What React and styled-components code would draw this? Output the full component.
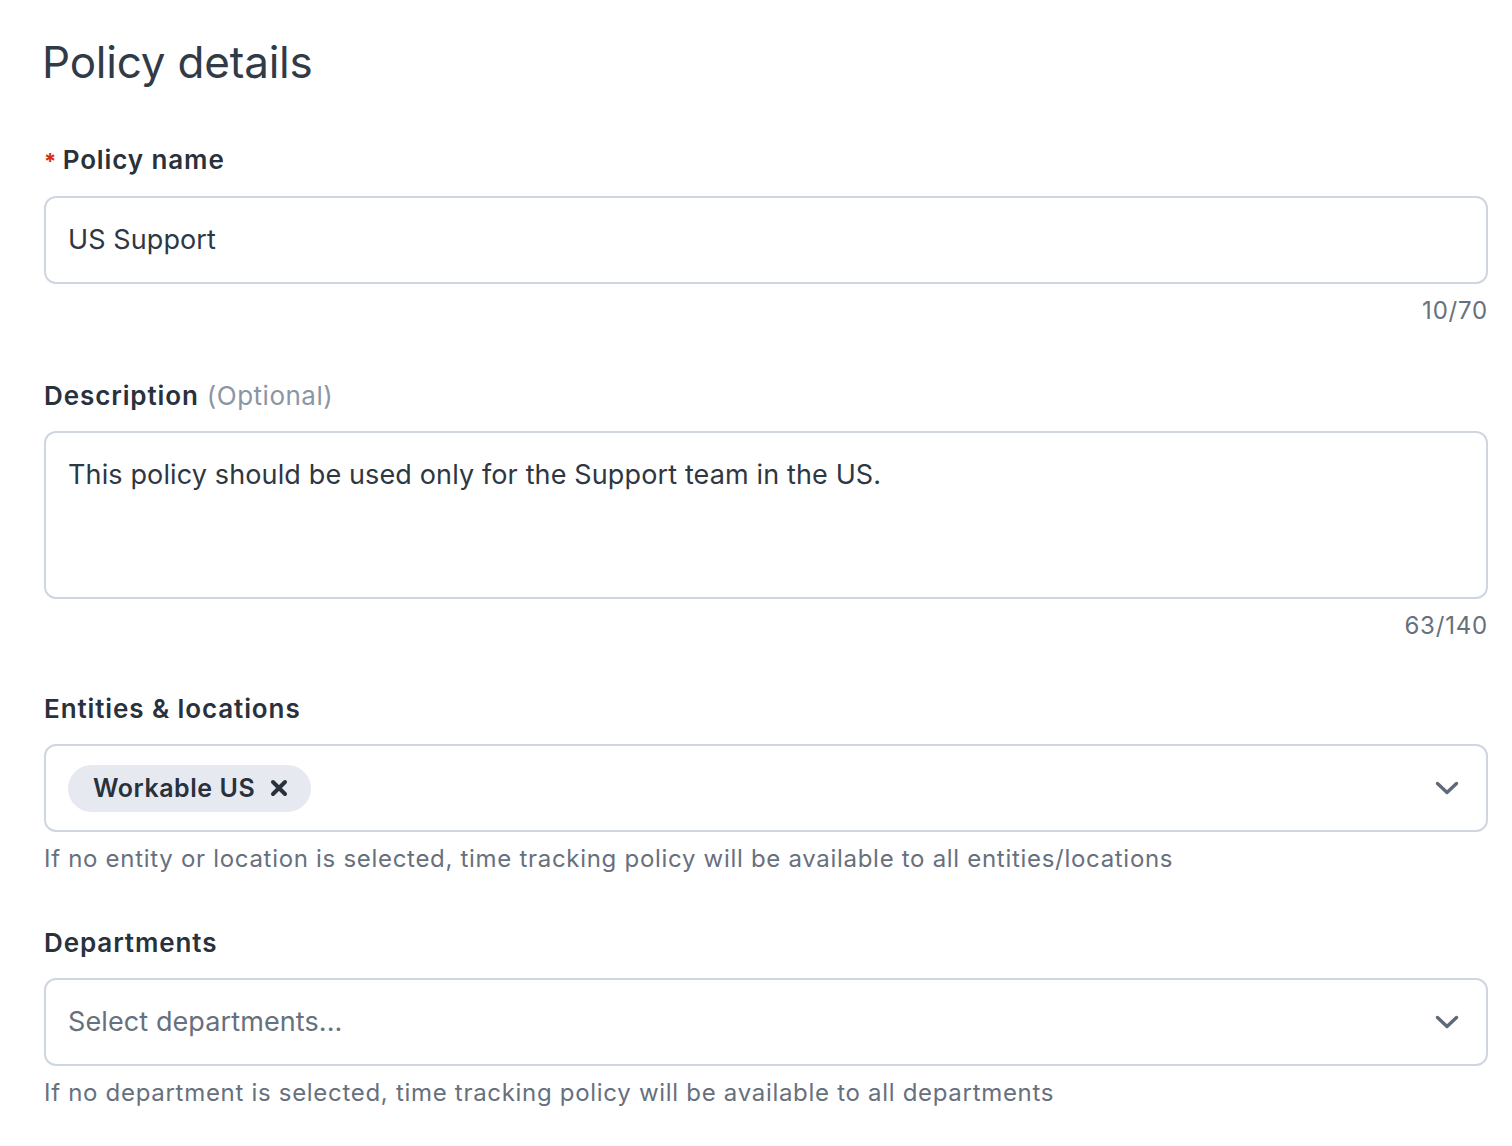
import React from "react";
import styled, { createGlobalStyle } from "styled-components";

const Global = createGlobalStyle`
  html, body { margin: 0; padding: 0; background: #ffffff; }
  body { font-family: Inter, "Noto Sans", "Liberation Sans", sans-serif; -webkit-font-smoothing: antialiased; }
  * { box-sizing: border-box; }
`;

const Page = styled.div`
  padding: 34px 24px 40px 44px;
  color: #2b3440;
`;

const Title = styled.h1`
  margin: 0 0 54px -2px;
  font-size: 44px;
  line-height: 56px;
  font-weight: 400;
  color: #313b47;
  letter-spacing: -0.2px;
`;

const Field = styled.div`
  display: flex;
  flex-direction: column;
  margin-bottom: ${(p) => p.$gap ?? 52}px;
`;

const Label = styled.label`
  display: flex;
  align-items: baseline;
  gap: 8px;
  font-size: 26px;
  line-height: 32px;
  font-weight: 600;
  letter-spacing: 0.9px;
  color: #28313c;
  margin-bottom: 19px;
`;

const Required = styled.span`
  color: #d12d1b;
  font-weight: 700;
  font-size: 22px;
  margin-right: -2px;
`;

const Optional = styled.span`
  font-weight: 400;
  letter-spacing: 0.5px;
  color: #8b95a3;
`;

const Box = styled.div`
  display: flex;
  align-items: ${(p) => (p.$multiline ? "flex-start" : "center")};
  height: ${(p) => p.$height || 88}px;
  border: 2px solid #cfd6e1;
  border-radius: 12px;
  padding: ${(p) => (p.$multiline ? "26px 22px" : "0 22px")};
  font-size: 27px;
  line-height: 32px;
  letter-spacing: ${(p) => (p.$multiline ? "0.13px" : "0.1px")};
  color: ${(p) => (p.$placeholder ? "#67707d" : "#2e3742")};
  background: #fff;
`;

const SelectBox = styled(Box)`
  justify-content: space-between;
  padding-right: 27px;
`;

const Counter = styled.div`
  align-self: flex-end;
  margin-top: 11px;
  font-size: 24px;
  line-height: 32px;
  letter-spacing: 0.8px;
  color: #67707d;
`;

const Helper = styled.div`
  margin-top: 11px;
  font-size: 24px;
  line-height: 32px;
  letter-spacing: 0.7px;
  color: #67707d;
`;

const Chip = styled.span`
  display: inline-flex;
  align-items: center;
  gap: 15px;
  height: 47px;
  padding: 0 23px 0 25px;
  border-radius: 24px;
  background: #e6eaf0;
  font-size: 25px;
  font-weight: 600;
  letter-spacing: 0.55px;
  color: #28313c;
`;

const Chevron = () => (
  <svg width="24" height="16" viewBox="0 0 24 16" fill="none">
    <path d="M2.5 3.5 L12 12.5 L21.5 3.5" stroke="#5f6a78" strokeWidth="3.4" strokeLinecap="round" strokeLinejoin="round" />
  </svg>
);

const Cross = () => (
  <svg width="18" height="18" viewBox="0 0 18 18" fill="none">
    <path d="M3 3 L15 15 M15 3 L3 15" stroke="#28313c" strokeWidth="4" strokeLinecap="round" />
  </svg>
);

export default function App() {
  return (
    <>
      <Global />
      <Page>
        <Title>Policy details</Title>

        <Field $gap={53}>
          <Label>
            <span>
              <Required>*</Required> Policy name
            </span>
          </Label>
          <Box>US Support</Box>
          <Counter>10/70</Counter>
        </Field>

        <Field $gap={51}>
          <Label>
            Description <Optional>(Optional)</Optional>
          </Label>
          <Box $multiline $height={168}>
            This policy should be used only for the Support team in the US.
          </Box>
          <Counter>63/140</Counter>
        </Field>

        <Field $gap={52}>
          <Label>Entities &amp; locations</Label>
          <SelectBox>
            <Chip>
              Workable US
              <Cross />
            </Chip>
            <Chevron />
          </SelectBox>
          <Helper>
            If no entity or location is selected, time tracking policy will be available to all entities/locations
          </Helper>
        </Field>

        <Field $gap={0}>
          <Label>Departments</Label>
          <SelectBox $placeholder>
            <span>Select departments...</span>
            <Chevron />
          </SelectBox>
          <Helper>
            If no department is selected, time tracking policy will be available to all departments
          </Helper>
        </Field>
      </Page>
    </>
  );
}
